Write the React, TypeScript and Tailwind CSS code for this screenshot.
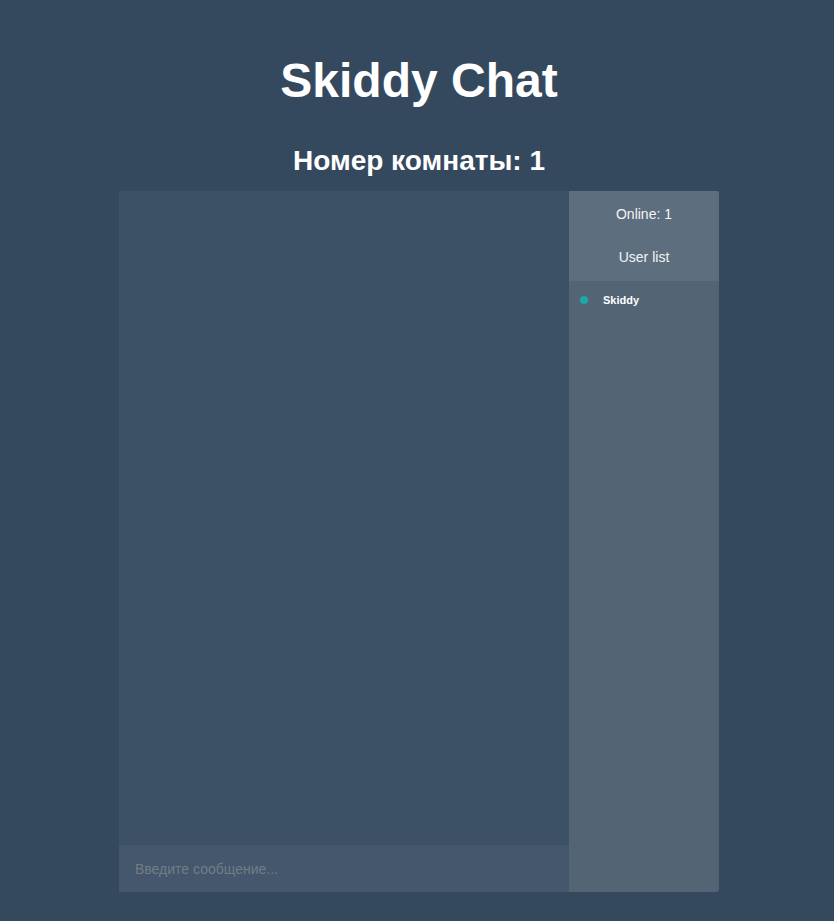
import React from "react";

export default function App() {
  return (
    <div className="min-h-[921px] w-full bg-[#35495e] flex flex-col items-center text-white pl-[4px]" style={{ fontFamily: '"Liberation Sans", Arial, sans-serif' }}>
      <h1 className="text-[48px] font-bold leading-[56px] mt-[53px]">Skiddy Chat</h1>
      <h2 className="text-[28px] font-bold leading-[32px] mt-[36px] mb-[14px]">Номер комнаты: 1</h2>
      <div className="flex w-[600px] h-[701px]">
        <div className="flex flex-col w-[450px] bg-[#3d5166]">
          <div className="flex-1" />
          <input
            className="h-[47px] bg-[#44576d] px-4 text-[14px] text-white placeholder:text-[#737d86] outline-none"
            placeholder="Введите сообщение..."
          />
        </div>
        <div className="flex flex-col w-[150px] bg-[#536475] rounded-r-[3px] overflow-hidden">
          <div className="bg-[#5d6e7e] h-[90px] flex flex-col items-center text-[14px] text-[#f3f4f6]">
            <div className="h-[44px] flex items-center pt-[2px]">Online: 1</div>
            <div className="h-[44px] flex items-center">User list</div>
          </div>
          <div className="flex items-center h-[38px] pl-[11px]">
            <span className="w-[8px] h-[8px] rounded-full bg-[#1aa9a9]" />
            <span className="ml-[15px] text-[11px] font-bold">Skiddy</span>
          </div>
        </div>
      </div>
    </div>
  );
}
